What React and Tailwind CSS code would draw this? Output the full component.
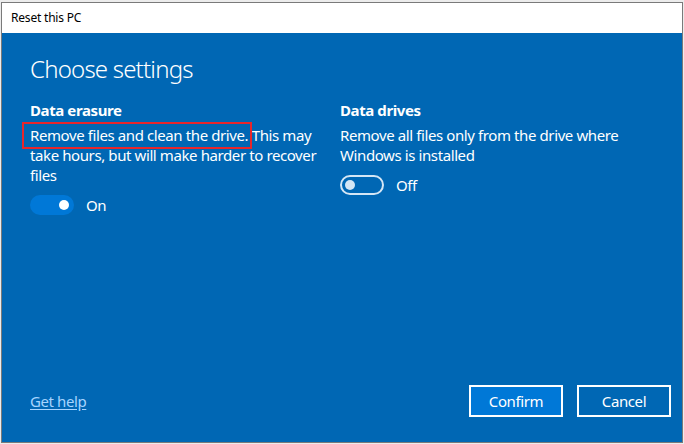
import { useState } from 'react'

function Toggle({ on, onChange }) {
  return (
    <button
      onClick={onChange}
      className={
        on
          ? 'relative h-[20px] w-[44px] rounded-full bg-[#0078d7]'
          : 'relative h-[20px] w-[44px] rounded-full border-2 border-[#d4e6f5] bg-transparent'
      }
    >
      <span
        className={
          on
            ? 'absolute right-[5px] top-[5px] h-[10px] w-[10px] rounded-full bg-white'
            : 'absolute left-[3px] top-[3px] h-[10px] w-[10px] rounded-full bg-[#d4e6f5]'
        }
      />
    </button>
  )
}

export default function App() {
  const [erase, setErase] = useState(true)
  const [drives, setDrives] = useState(false)

  return (
    <div
      className="h-[444px] w-[684px] bg-[#ececec] px-px pb-px pt-[2px]"
      style={{ fontFamily: '"Noto Sans", "Open Sans", sans-serif' }}
    >
      <div className="flex h-full flex-col border border-[#7a7a7a]">
        {/* title bar */}
        <div className="flex h-[30px] items-center bg-white pl-[9px] text-[12px] tracking-[-0.2px] text-black">
          Reset this PC
        </div>

        <div className="flex flex-1 flex-col bg-[#0067b4] px-[28px] text-[15px] tracking-[-0.4px] text-white">
          <h1 className="mt-[20px] text-[24px] font-light leading-[32px] tracking-[-0.8px]">Choose settings</h1>

          <div className="mt-[15px] grid grid-cols-[310px_1fr]">
            {/* data erasure */}
            <div>
              <h2 className="font-bold leading-[20px]">Data erasure</h2>
              <p className="mt-[5px] w-[300px] leading-[20px]">
                <span className="relative">
                  Remove files and clean the drive.
                  <span className="absolute -left-[8px] -right-[4px] -top-[3px] -bottom-[4px] border-2 border-[#e8262b]" />
                </span>{' '}
                This may take hours, but will make harder to recover files
              </p>
              <div className="mt-[9px] flex items-center gap-[12px]">
                <Toggle on={erase} onChange={() => setErase(!erase)} />
                <span>{erase ? 'On' : 'Off'}</span>
              </div>
            </div>

            {/* data drives */}
            <div>
              <h2 className="font-bold leading-[20px]">Data drives</h2>
              <p className="mt-[5px] w-[300px] leading-[20px]">
                Remove all files only from the drive where Windows is installed
              </p>
              <div className="mt-[9px] flex items-center gap-[12px]">
                <Toggle on={drives} onChange={() => setDrives(!drives)} />
                <span>{drives ? 'On' : 'Off'}</span>
              </div>
            </div>
          </div>

          {/* footer */}
          <div className="mt-auto mb-[25px] flex items-center justify-between">
            <a href="#" className="text-[#a6d4ff] underline underline-offset-2">
              Get help
            </a>
            <div className="flex gap-[14px] mr-[-17px]">
              <button className="h-[32px] w-[94px] border-2 border-white bg-[#0078d7]">
                Confirm
              </button>
              <button className="h-[32px] w-[94px] border-2 border-white">
                Cancel
              </button>
            </div>
          </div>
        </div>
      </div>
    </div>
  )
}
